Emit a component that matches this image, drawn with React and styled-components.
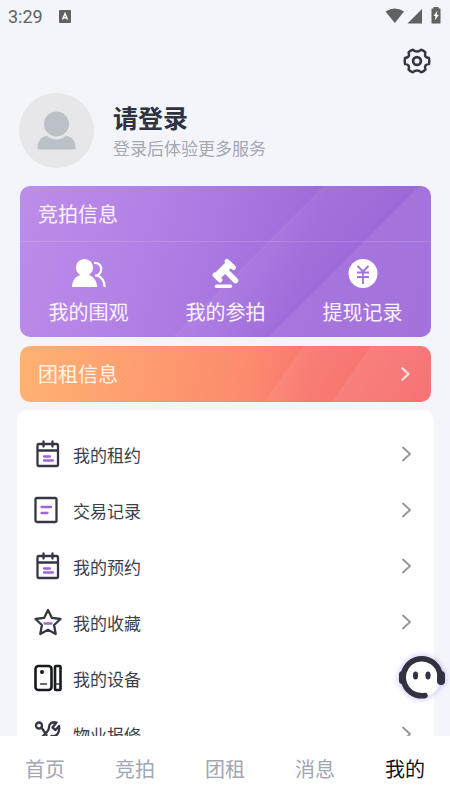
import React, { useState } from "react";
import styled, { createGlobalStyle } from "styled-components";

const GlobalStyle = createGlobalStyle`
  * {
    box-sizing: border-box;
  }

  body {
    margin: 0;
    background: #f4f5fa;
    font-family: "Noto Sans CJK SC", "Noto Sans", sans-serif;
    color: #2f323f;
  }

  button {
    border: none;
    padding: 0;
    background: none;
    font-family: inherit;
    color: inherit;
    cursor: pointer;
  }

  a {
    color: inherit;
    text-decoration: none;
  }

  svg {
    display: block;
    flex-shrink: 0;
  }
`;

const Page = styled.div`
  position: relative;
  height: 100vh;
  display: flex;
  flex-direction: column;
`;

const StatusBar = styled.div`
  display: flex;
  align-items: center;
  justify-content: space-between;
  height: 32px;
  padding: 0 8px;
  color: #616163;
  font-family: Roboto, sans-serif;
  font-size: 18px;
`;

const StatusGroup = styled.div`
  display: flex;
  align-items: center;
  gap: ${({ $gap }) => $gap}px;
`;

const Content = styled.main`
  flex: 1;
  min-height: 0;
  overflow-y: auto;
  scrollbar-width: none;

  &::-webkit-scrollbar {
    display: none;
  }
`;

const Toolbar = styled.div`
  display: flex;
  justify-content: flex-end;
  padding: 15px 18px 18px;
`;

const Profile = styled.button`
  display: flex;
  align-items: center;
  gap: 19px;
  width: 100%;
  padding: 0 19px;
  margin-bottom: 18px;
  text-align: left;
`;

const ProfileText = styled.span`
  display: flex;
  flex-direction: column;
`;

const ProfileTitle = styled.span`
  font-size: 25px;
  font-weight: 700;
  line-height: 34px;
`;

const ProfileHint = styled.span`
  font-size: 17px;
  line-height: 28px;
  color: #a3a8b2;
`;

const Cards = styled.div`
  display: flex;
  flex-direction: column;
  gap: 9px;
  padding: 0 19px 8px 20px;
`;

const AuctionCard = styled.section`
  border-radius: 10px;
  color: #fbf3ff;
  background:
    linear-gradient(
      135deg,
      transparent 54%,
      rgba(255, 255, 255, 0.05) 54%,
      transparent 71%,
      rgba(255, 255, 255, 0.07) 71%
    ),
    linear-gradient(105deg, #bd8dea 0%, #b07fe4 35%, #9f6bdb 68%, #9c68d9 100%);
`;

const CardTitle = styled.h2`
  margin: 0;
  padding: 0 18px;
  font-size: 20px;
  font-weight: 400;
  line-height: 55px;
  border-bottom: 1px solid rgba(255, 255, 255, 0.13);
`;

const Shortcuts = styled.div`
  display: grid;
  grid-template-columns: repeat(3, 1fr);
  padding: 15px 0 10px;
`;

const Shortcut = styled.a`
  display: flex;
  flex-direction: column;
  align-items: center;
  gap: 8px;
  font-size: 20px;
  line-height: 30px;
`;

const RentCard = styled.a`
  display: flex;
  align-items: center;
  justify-content: space-between;
  height: 56px;
  padding: 0 19px 0 18px;
  border-radius: 10px;
  color: #fff3ea;
  font-size: 20px;
  line-height: 54px;
  background:
    linear-gradient(
      125deg,
      transparent 63%,
      rgba(255, 255, 255, 0.06) 63%,
      transparent 78%,
      rgba(255, 255, 255, 0.08) 78%,
      transparent 100%
    ),
    linear-gradient(98deg, #ffb273 0%, #fc8b6d 55%, #f87870 70%, #f77274 100%);
`;

const Menu = styled.nav`
  margin: 0 16px 0 17px;
  padding: 16px 0;
  border-radius: 10px;
  background: #fff;
`;

const MenuRow = styled.a`
  display: flex;
  align-items: center;
  gap: 11px;
  height: 56px;
  padding: 0 20px 0 17px;
  font-size: 17px;
  color: #3c3f4a;

  span {
    flex: 1;
  }
`;

const TabBar = styled.nav`
  display: flex;
  height: 64px;
  background: #fff;
`;

const Tab = styled.button`
  && {
    flex: 1;
    padding-top: 2px;
    font-size: 20px;
    line-height: 62px;
    color: ${({ $active }) => ($active ? "#111216" : "#a2a6b2")};
  }
`;

const SupportButton = styled.button`
  && {
    position: absolute;
    right: 4px;
    bottom: 99px;
    border-radius: 50%;
    filter: drop-shadow(0 0 3px rgba(150, 110, 255, 0.55));
  }
`;

const LineSvg = styled.svg.attrs({
  fill: "none",
  stroke: "#353844",
  strokeWidth: 2.3,
  strokeLinecap: "round",
  strokeLinejoin: "round",
})``;

const GearIcon = () => (
  <LineSvg width="30" height="28" viewBox="-15 -14 30 28">
    <path
      strokeWidth="2.5"
      d="M12-3Q12.6 0 12 3Q9.600 3.200 8.400 4.600Q7.600 6 8.400 8.600Q6.400 10.700 4 11.300Q2.400 9.400 0 9.400T-4 11.300Q-6.400 10.700-8.400 8.600Q-7.600 6-8.400 4.600Q-9.600 3.200-12 3Q-12.600 0-12-3Q-9.600-3.200-8.400-4.600Q-7.600-6-8.400-8.600Q-6.400-10.700-4-11.300Q-2.400-9.400 0-9.400T4-11.300Q6.400-10.700 8.400-8.600Q7.600-6 8.400-4.600Q9.600-3.200 12-3Z"
    />
    <circle r="3.900" strokeWidth="2.700" />
  </LineSvg>
);

const AvatarIcon = () => (
  <svg width="75" height="75" viewBox="0 0 75 75">
    <circle cx="37.5" cy="37.5" r="37.5" fill="#e7e7eb" />
    <circle cx="37.5" cy="31" r="12.5" fill="#bcc1c8" />
    <path
      fill="#bcc1c8"
      d="M18.5 56.500V54c0-6 4-10.500 9.500-11.200 6 5 13 5 19 0 5.500.7 9.500 5.200 9.500 11.200v2.500z"
    />
  </svg>
);

const WatchIcon = () => (
  <svg width="36" height="32" viewBox="0 0 36 32" fill="none">
    <circle cx="13.500" cy="10.500" r="8.600" fill="#fff" />
    <path fill="#fff" d="M1 30c0-6 3.500-10.500 8-12h9c4.500 1.500 8 6 8 12z" />
    <path
      d="M23 6c5-.5 7.500 3 7.200 6.500-.2 3-2 5-4.200 6h-2M26 18.500c4.500 1.500 7.500 5.500 7.700 11.500"
      stroke="#fff"
      strokeWidth="2.200"
    />
  </svg>
);

const HammerIcon = () => (
  <svg width="32" height="32" viewBox="0 0 32 32" stroke="#fff" strokeLinecap="round">
    <path d="M8.500 18L18.500 8" strokeWidth="8" strokeLinecap="butt" />
    <path d="M5 18L10 23M17 4.500L23.500 10.500" strokeWidth="5" />
    <path d="M15 13L25.500 23.500" strokeWidth="5.500" />
    <path d="M6.500 29.300H20.500" strokeWidth="3.400" />
  </svg>
);

const YuanIcon = () => (
  <svg width="32" height="32" viewBox="0 0 32 32" fill="none">
    <circle cx="16" cy="16.500" r="14.500" fill="#fff" />
    <path
      d="M10.500 9l5.500 5.500L21.500 9M16 14.500V27M10 15.500h12M10 20h12"
      stroke="#a171dc"
      strokeWidth="1.800"
    />
  </svg>
);

const CalendarIcon = () => (
  <LineSvg width="28" height="28" viewBox="0 0 28 28">
    <rect x="3.500" y="4" width="20.500" height="22" rx="1.500" />
    <path d="M4 10.500h20M9.500 1.500v5M18.500 1.500v5" />
    <path stroke="#9b66df" d="M10 16.500h6M10 20.500h9" />
  </LineSvg>
);

const RecordIcon = () => (
  <LineSvg width="28" height="28" viewBox="0 0 28 28">
    <rect x="1.500" y="2" width="21" height="24" rx="1.500" />
    <path stroke="#9b66df" d="M7.500 11h9.500M7.500 17h6" />
  </LineSvg>
);

const StarIcon = () => (
  <LineSvg width="28" height="28" viewBox="0 0 28 28">
    <path d="M14 2l3.800 7.800 8.700 1.200-6.400 6 1.600 9L14 21.800 6.300 26l1.600-9-6.400-6 8.700-1.200z" />
    <path stroke="#9b66df" d="M10.500 15.500h7" />
  </LineSvg>
);

const DeviceIcon = () => (
  <LineSvg width="28" height="28" viewBox="0 0 28 28">
    <g stroke="#17191f" strokeWidth="2.600">
      <rect x="1.500" y="2" width="16" height="24" rx="3" />
      <rect x="21" y="2" width="5.500" height="24" rx="1" />
    </g>
    <circle cx="8" cy="8" r="2" fill="#17191f" stroke="none" />
    <path strokeWidth="1.400" d="M6.500 20h6M22 20h3.500" />
  </LineSvg>
);

const RepairIcon = () => (
  <LineSvg width="28" height="28" viewBox="0 0 28 28">
    <circle cx="5" cy="5.500" r="3" />
    <path d="M7.500 7.500L12.500 15M22.500 2.500c-4-1-7.500 1-7.500 4.500.1 2-.5 3.500-2 5L4 21c-2 2 1.500 6 4 4l9.500-9c5 1 8.500-3 7.500-10l-3.500 4-3-2.500zM19 19l6 6" />
  </LineSvg>
);

const Chevron = ({ size = 16, color = "#94959a", width = 1.8 }) => (
  <svg width={size} height={size} viewBox="0 0 16 16" fill="none">
    <path
      d="M5 1.500L12 8l-7 6.500"
      stroke={color}
      strokeWidth={width}
      strokeLinecap="round"
      strokeLinejoin="round"
    />
  </svg>
);

const SupportIcon = () => (
  <svg width="48" height="46" viewBox="0 0 48 46" fill="none">
    <circle cx="24" cy="23" r="19" fill="#fff" />
    <path
      d="M42 19A18.500 18.500 0 1 0 27 40.500"
      stroke="#30323f"
      strokeWidth="5.500"
      strokeLinecap="round"
    />
    <rect x="1" y="16" width="7" height="13" rx="3.500" fill="#30323f" />
    <rect x="39" y="16" width="8" height="14" rx="4" fill="#30323f" />
    <ellipse cx="17.500" cy="20.500" rx="2.600" ry="4" fill="#30323f" />
    <ellipse cx="30" cy="20.500" rx="2.600" ry="4" fill="#30323f" />
  </svg>
);

const InputIcon = () => (
  <svg width="12" height="13" viewBox="0 0 12 13">
    <rect width="12" height="13" rx="1" fill="#616163" />
    <path d="M3.500 9.500L6 3.500l2.500 6M4.300 7.800h3.400" fill="none" stroke="#fff" strokeWidth="1.400" />
  </svg>
);

const SignalIcons = () => (
  <svg width="58" height="18" viewBox="0 0 58 18" fill="#616163">
    <path d="M1.500 4.500Q10.800-1.500 20 4.500L10.800 16z" />
    <path d="M38 2v14.500H23.500z" />
    <path d="M49.500 0h5v1.500H56.500V16.500H47.500V1.500h2z" />
    <path fill="#fff" d="M53.500 3.500L49.500 9h2l-.8 4.500L55 7.800h-2.200z" />
  </svg>
);

const shortcuts = [
  { title: "我的围观", icon: WatchIcon },
  { title: "我的参拍", icon: HammerIcon },
  { title: "提现记录", icon: YuanIcon },
];

const menuItems = [
  { title: "我的租约", icon: CalendarIcon },
  { title: "交易记录", icon: RecordIcon },
  { title: "我的预约", icon: CalendarIcon },
  { title: "我的收藏", icon: StarIcon },
  { title: "我的设备", icon: DeviceIcon },
  { title: "物业报修", icon: RepairIcon },
];

const tabs = ["首页", "竞拍", "团租", "消息", "我的"];

const App = () => {
  const [activeTab, setActiveTab] = useState("我的");

  return (
    <>
      <GlobalStyle />
      <Page>
        <StatusBar>
          <StatusGroup $gap={16}>
            <span>3:29</span>
            <InputIcon />
          </StatusGroup>
          <SignalIcons />
        </StatusBar>
        <Content>
          <Toolbar>
            <button aria-label="设置">
              <GearIcon />
            </button>
          </Toolbar>
          <Profile>
            <AvatarIcon />
            <ProfileText>
              <ProfileTitle>请登录</ProfileTitle>
              <ProfileHint>登录后体验更多服务</ProfileHint>
            </ProfileText>
          </Profile>
          <Cards>
            <AuctionCard>
              <CardTitle>竞拍信息</CardTitle>
              <Shortcuts>
                {shortcuts.map(({ title, icon: Icon }) => (
                  <Shortcut key={title} href="#">
                    <Icon />
                    {title}
                  </Shortcut>
                ))}
              </Shortcuts>
            </AuctionCard>
            <RentCard href="#">
              团租信息
              <Chevron size={14} color="#ffe9e4" width={2.4} />
            </RentCard>
          </Cards>
          <Menu>
            {menuItems.map(({ title, icon: Icon }) => (
              <MenuRow key={title} href="#">
                <Icon />
                <span>{title}</span>
                <Chevron />
              </MenuRow>
            ))}
          </Menu>
        </Content>
        <TabBar>
          {tabs.map((tab) => (
            <Tab key={tab} $active={tab === activeTab} onClick={() => setActiveTab(tab)}>
              {tab}
            </Tab>
          ))}
        </TabBar>
        <SupportButton aria-label="在线客服">
          <SupportIcon />
        </SupportButton>
      </Page>
    </>
  );
};

export default App;
